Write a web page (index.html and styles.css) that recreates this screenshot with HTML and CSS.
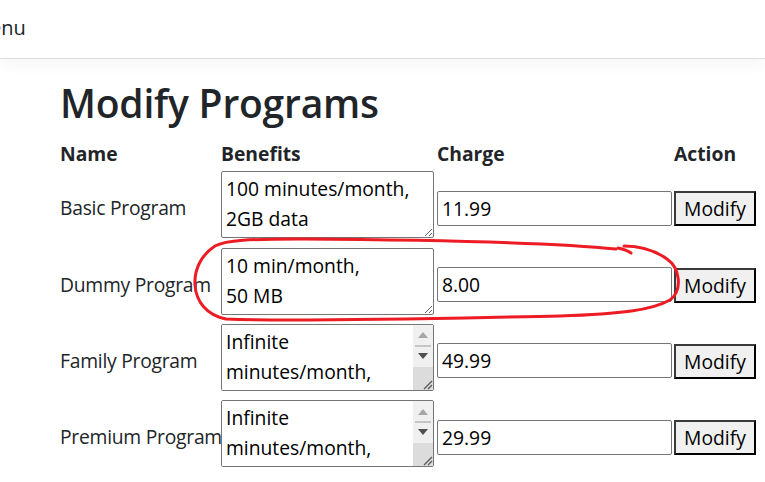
FILE: index.html
```html
<!DOCTYPE html>
<html lang="en">
<head>
<meta charset="utf-8">
<title>Modify Programs</title>
<link rel="stylesheet" href="styles.css">
</head>
<body>
<header class="navbar">
  <span class="brand">Menu</span>
</header>
<main class="container">
  <h1 class="title">Modify Programs</h1>
  <div class="programs">
    <div class="head">Name</div>
    <div class="head">Benefits</div>
    <div class="head">Charge</div>
    <div class="head">Action</div>

    <div class="name">Basic Program</div>
    <textarea class="benefits">100 minutes/month,
2GB data</textarea>
    <input class="charge" type="text" value="11.99">
    <button class="btn" type="button">Modify</button>

    <div class="name">Dummy Program</div>
    <textarea class="benefits">10 min/month,
50 MB</textarea>
    <input class="charge" type="text" value="8.00">
    <button class="btn" type="button">Modify</button>

    <div class="name">Family Program</div>
    <div class="scrollbox">
      <textarea class="scroll-text">Infinite minutes/month, 50GB data, 5 lines</textarea>
      <div class="vbar" aria-hidden="true">
        <span class="vbtn up"><svg width="10" height="6" viewBox="0 0 10 6"><path d="M0 6 L10 6 L5 0 Z" fill="#a6a6a6"/></svg></span>
        <span class="vthumb"></span>
        <span class="vbtn down"><svg width="10" height="6" viewBox="0 0 10 6"><path d="M0 0 L10 0 L5 6 Z" fill="#505050"/></svg></span>
        <span class="vcorner"><svg width="12" height="12" viewBox="0 0 12 12"><path d="M11 3 L3 11 M11 7 L7 11" stroke="#5a5a5a" stroke-width="1.3" fill="none"/></svg></span>
      </div>
    </div>
    <input class="charge" type="text" value="49.99">
    <button class="btn" type="button">Modify</button>

    <div class="name">Premium Program</div>
    <div class="scrollbox">
      <textarea class="scroll-text">Infinite minutes/month, unlimited data</textarea>
      <div class="vbar" aria-hidden="true">
        <span class="vbtn up"><svg width="10" height="6" viewBox="0 0 10 6"><path d="M0 6 L10 6 L5 0 Z" fill="#a6a6a6"/></svg></span>
        <span class="vthumb"></span>
        <span class="vbtn down"><svg width="10" height="6" viewBox="0 0 10 6"><path d="M0 0 L10 0 L5 6 Z" fill="#505050"/></svg></span>
        <span class="vcorner"><svg width="12" height="12" viewBox="0 0 12 12"><path d="M11 3 L3 11 M11 7 L7 11" stroke="#5a5a5a" stroke-width="1.3" fill="none"/></svg></span>
      </div>
    </div>
    <input class="charge" type="text" value="29.99">
    <button class="btn" type="button">Modify</button>
  </div>
</main>
<svg class="annotation" width="765" height="482" viewBox="0 0 765 482" aria-hidden="true">
  <path d="M 616 249 C 560 243, 450 240, 300 239 C 250 239, 226 240, 215 246 C 201 255, 194 270, 195 285 C 196 301, 206 315, 226 319 C 300 322, 450 318, 560 316 C 622 314, 652 310, 670 300 C 683 290, 680 268, 667 259 C 656 251, 642 246, 624 246 M 618 248 C 623 249, 627 250, 631 253" fill="none" stroke="#ed1c24" stroke-width="3" stroke-linecap="round" stroke-linejoin="round"/>
</svg>
</body>
</html>
```

FILE: styles.css
```css
html, body {
  margin: 0;
  padding: 0;
}

body {
  font-family: "Open Sans", "Noto Sans", sans-serif;
  font-size: 19.3px;
  line-height: 30px;
  color: #212529;
  background: #ffffff;
  position: relative;
  overflow: hidden;
  height: 482px;
}

.navbar {
  box-sizing: border-box;
  height: 59px;
  border-bottom: 1px solid #dcdce2;
  box-shadow: 0 5px 14px rgba(0, 0, 0, 0.045);
  display: flex;
  align-items: center;
  padding-bottom: 3px;
}

.brand {
  margin-left: -28px;
  font-size: 20px;
  color: #212529;
}

.container {
  padding-left: 60px;
}

.title {
  font-size: 39px;
  font-weight: 600;
  letter-spacing: -0.2px;
  line-height: 48px;
  margin: 20px 0 12px;
}

.programs {
  display: grid;
  grid-template-columns: 161px 216px 237px 83px;
  row-gap: 2.3px;
  align-items: center;
}

.head {
  font-weight: 700;
  align-self: end;
}

.name {
  white-space: nowrap;
  letter-spacing: -0.25px;
}

.benefits {
  box-sizing: border-box;
  width: 213px;
  height: 67px;
  margin: 0 0 7px 0;
  padding: 2px 4px;
  font-family: inherit;
  font-size: 19.3px;
  line-height: 30px;
  color: #000;
  border: 1px solid #767676;
  border-radius: 2px;
  background: #fff;
}

.scrollbox {
  box-sizing: border-box;
  width: 213px;
  height: 67px;
  margin: 0 0 7px 0;
  display: flex;
  border: 1px solid #767676;
  border-radius: 2px;
  background: #fff;
  overflow: hidden;
}

.scroll-text {
  flex: 1;
  min-width: 0;
  margin: 0;
  padding: 2px 4px;
  border: none;
  outline: none;
  resize: none;
  overflow: hidden;
  font-family: inherit;
  font-size: 19.3px;
  line-height: 30px;
  color: #000;
  background: #fff;
}

.vbar {
  width: 20px;
  display: flex;
  flex-direction: column;
  background: #f0f0f0;
}

.vbtn {
  display: flex;
  align-items: center;
  justify-content: center;
}

.vbtn.up {
  height: 19px;
  padding-top: 2px;
  box-sizing: border-box;
}

.vthumb {
  height: 2px;
  margin: 1px 2px 0;
  background: #c6c6c6;
}

.vbtn.down {
  height: 20px;
  padding-bottom: 2px;
  box-sizing: border-box;
}

.vcorner {
  flex: 1;
  background: #dcdcdc;
  display: flex;
  align-items: flex-end;
  justify-content: flex-end;
}

.charge {
  box-sizing: border-box;
  width: 235px;
  height: 35px;
  margin: 0;
  padding: 1px 4px;
  font-family: inherit;
  font-size: 19.3px;
  color: #000;
  border: 1px solid #767676;
  border-radius: 2px;
  background: #fff;
}

.btn {
  box-sizing: border-box;
  width: 82px;
  height: 35px;
  margin: 1px 0 0 0;
  padding: 0 4px;
  font-family: inherit;
  font-size: 19.3px;
  color: #000;
  background: #f0f0f0;
  border: 2px solid #3a3a3a;
  border-right-color: #000;
  border-bottom-color: #000;
  border-radius: 0;
}

.annotation {
  position: absolute;
  left: 0;
  top: 0;
  pointer-events: none;
}
```
